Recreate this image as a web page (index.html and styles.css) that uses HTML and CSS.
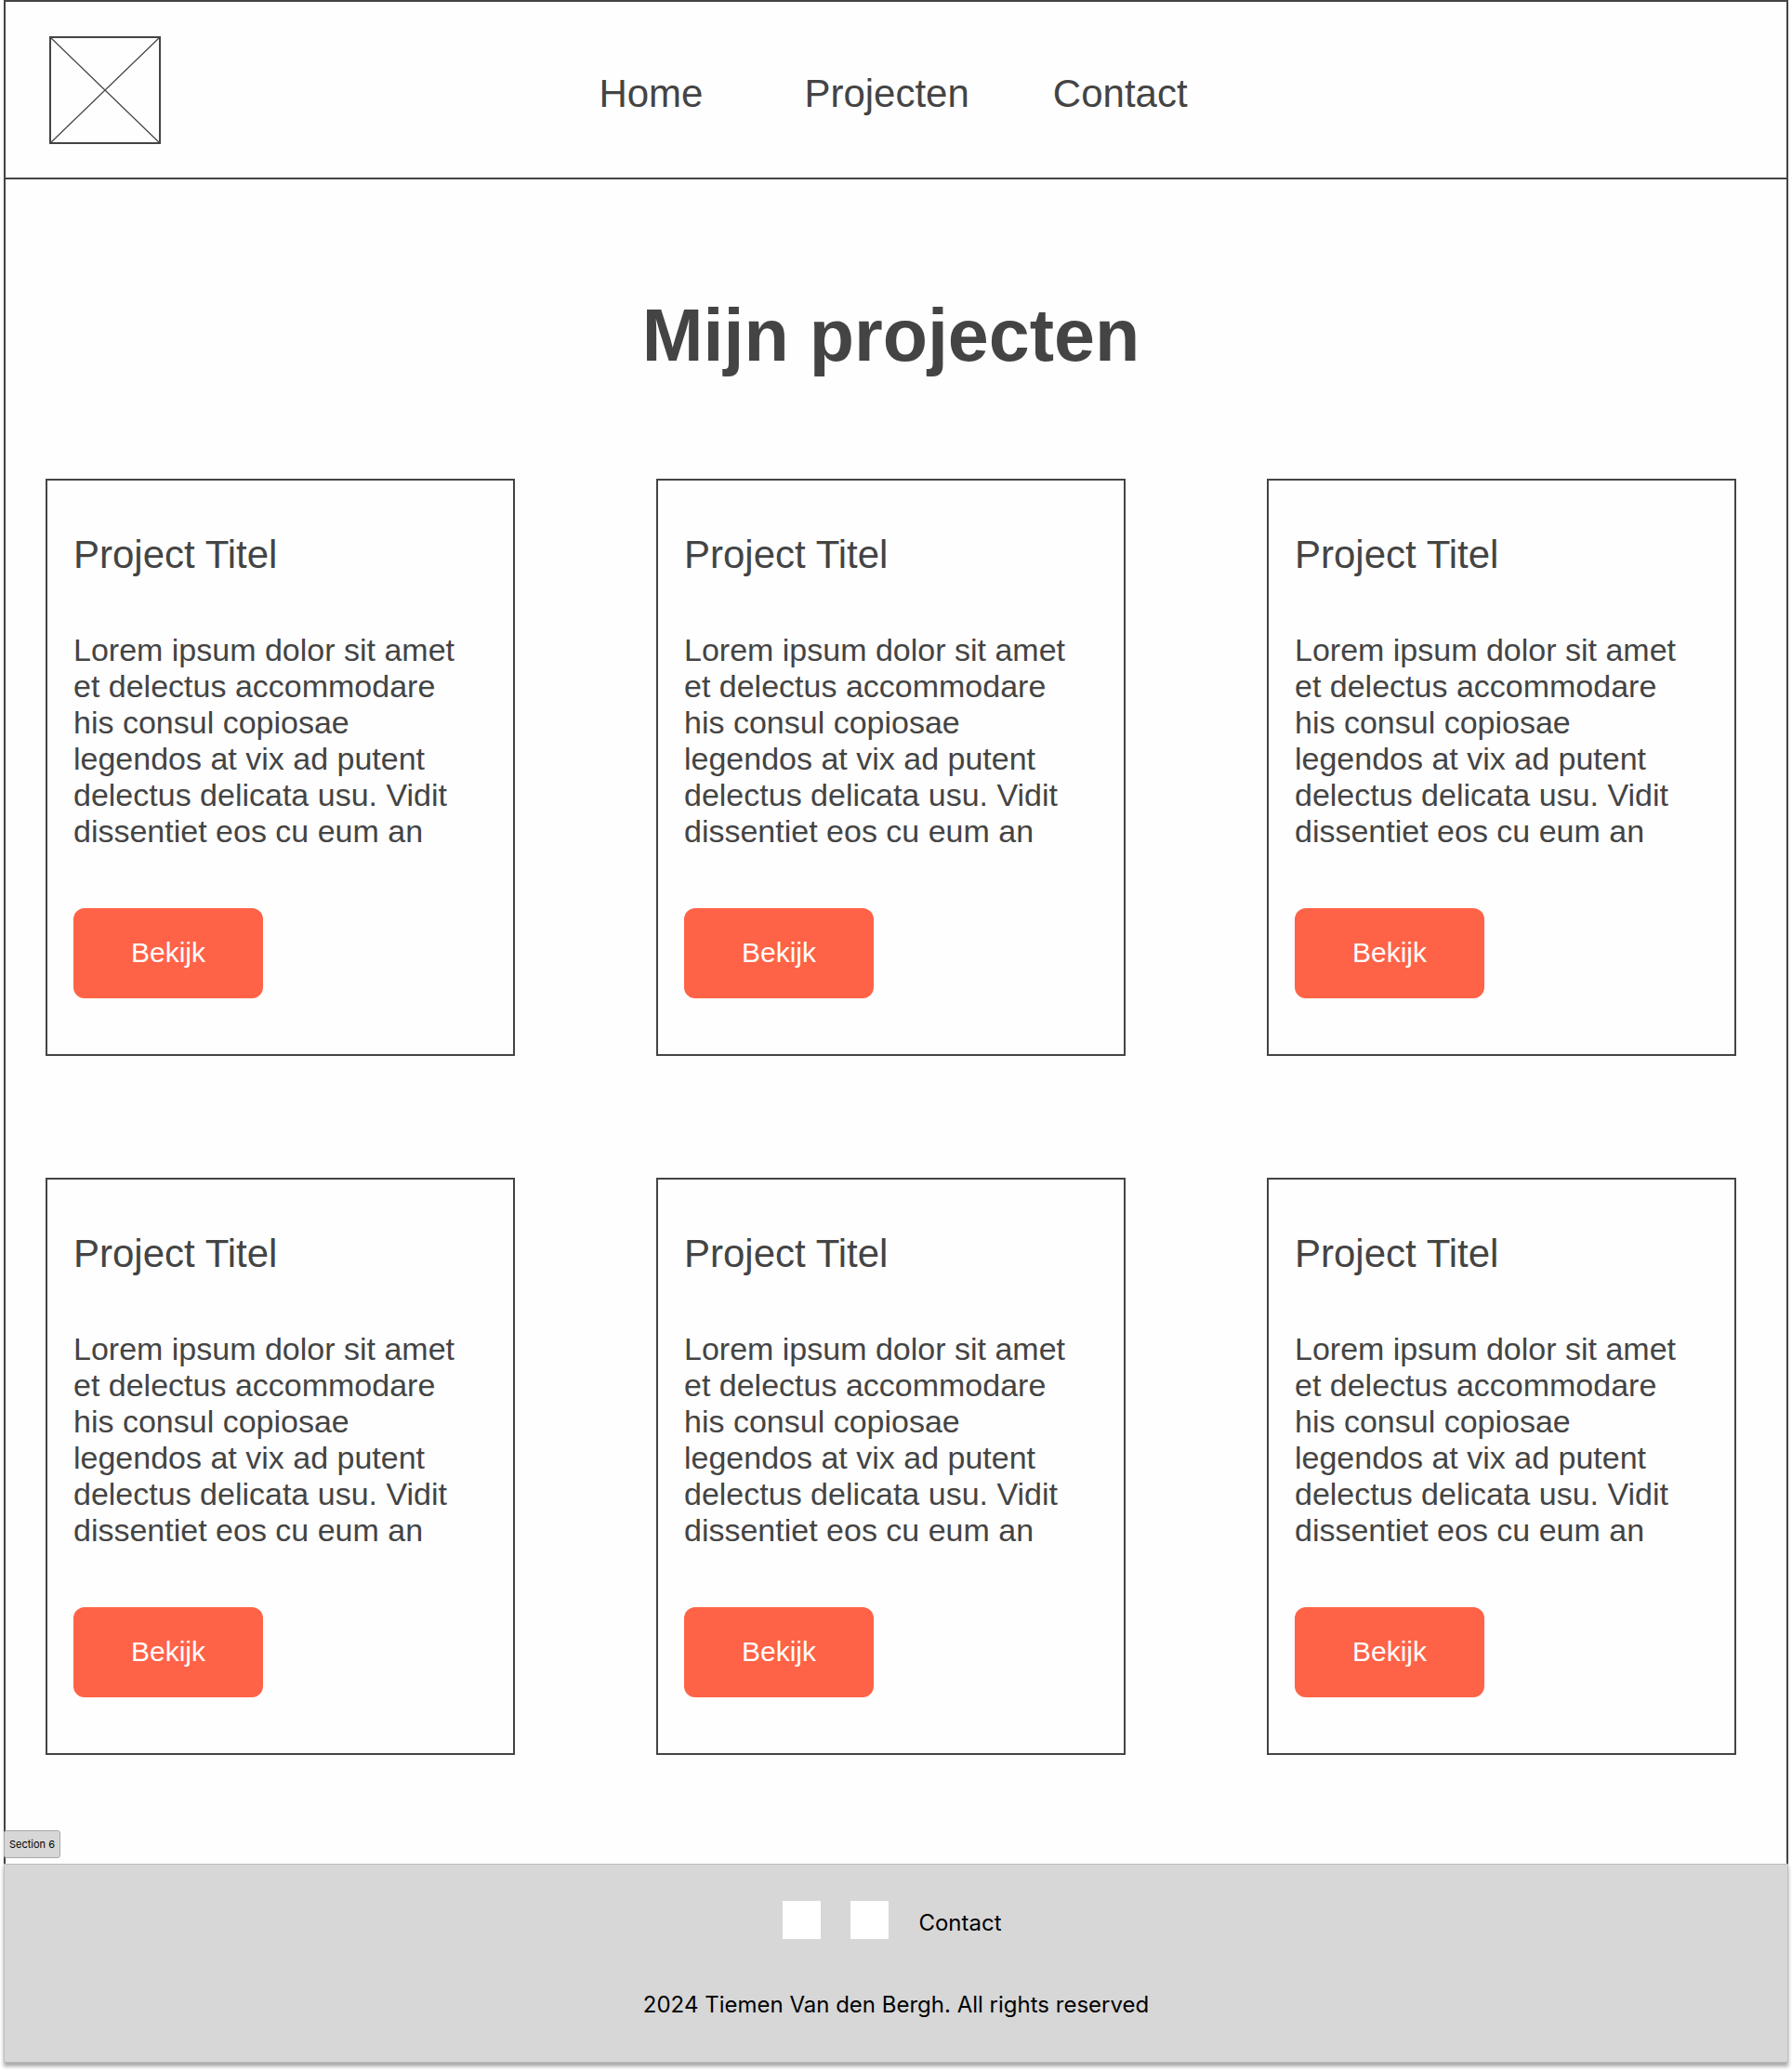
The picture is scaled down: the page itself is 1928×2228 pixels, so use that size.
FILE: index.html
```html
<!DOCTYPE html>
<html lang="nl">
<head>
  <meta charset="utf-8">
  <meta name="viewport" content="width=device-width, initial-scale=1">
  <title>Mijn projecten</title>
  <link rel="stylesheet" href="styles.css">
</head>
<body>
  <div class="page">
    <div class="frame">
      <header class="header">
        <svg class="logo" viewBox="0 0 120 116" aria-hidden="true">
          <path class="logo-cross" d="M1 1 119 115M119 1 1 115"/>
          <rect class="logo-box" x="1" y="1" width="118" height="114"/>
        </svg>
        <nav class="nav">
          <a class="nav-link nav-link-home" href="#">Home</a>
          <a class="nav-link" href="#">Projecten</a>
          <a class="nav-link" href="#">Contact</a>
        </nav>
      </header>

      <main class="main">
        <h1 class="heading">Mijn projecten</h1>
        <div class="projects">
          <article class="card">
            <h2 class="card-title">Project Titel</h2>
            <p class="card-text">Lorem ipsum dolor sit amet et delectus accommodare his consul copiosae legendos at vix ad putent delectus delicata usu. Vidit dissentiet eos cu eum an</p>
            <button class="card-button" type="button">Bekijk</button>
          </article>
          <article class="card">
            <h2 class="card-title">Project Titel</h2>
            <p class="card-text">Lorem ipsum dolor sit amet et delectus accommodare his consul copiosae legendos at vix ad putent delectus delicata usu. Vidit dissentiet eos cu eum an</p>
            <button class="card-button" type="button">Bekijk</button>
          </article>
          <article class="card">
            <h2 class="card-title">Project Titel</h2>
            <p class="card-text">Lorem ipsum dolor sit amet et delectus accommodare his consul copiosae legendos at vix ad putent delectus delicata usu. Vidit dissentiet eos cu eum an</p>
            <button class="card-button" type="button">Bekijk</button>
          </article>
          <article class="card">
            <h2 class="card-title">Project Titel</h2>
            <p class="card-text">Lorem ipsum dolor sit amet et delectus accommodare his consul copiosae legendos at vix ad putent delectus delicata usu. Vidit dissentiet eos cu eum an</p>
            <button class="card-button" type="button">Bekijk</button>
          </article>
          <article class="card">
            <h2 class="card-title">Project Titel</h2>
            <p class="card-text">Lorem ipsum dolor sit amet et delectus accommodare his consul copiosae legendos at vix ad putent delectus delicata usu. Vidit dissentiet eos cu eum an</p>
            <button class="card-button" type="button">Bekijk</button>
          </article>
          <article class="card">
            <h2 class="card-title">Project Titel</h2>
            <p class="card-text">Lorem ipsum dolor sit amet et delectus accommodare his consul copiosae legendos at vix ad putent delectus delicata usu. Vidit dissentiet eos cu eum an</p>
            <button class="card-button" type="button">Bekijk</button>
          </article>
        </div>
      </main>
    </div>

    <footer class="footer">
      <span class="section-tag">Section 6</span>
      <div class="footer-links">
        <span class="social"></span>
        <span class="social"></span>
        <a class="footer-contact" href="#">Contact</a>
      </div>
      <p class="copyright">2024 Tiemen Van den Bergh. All rights reserved</p>
    </footer>
  </div>
</body>
</html>
```
FILE: styles.css
```css
* {
  box-sizing: border-box;
}

body {
  margin: 0;
  background: #fff;
  color: #444;
  font-family: "Liberation Sans", Arial, sans-serif;
}

.page {
  margin: 0 4px 8px;
  background: #fefefe;
  box-shadow: 0 4px 4px rgba(0, 0, 0, 0.12);
}

.frame {
  border: 2px solid #444;
  border-bottom: 0;
}

/* Header */
.header {
  display: grid;
  grid-template-columns: 1fr auto 1fr;
  align-items: center;
  padding: 37px 53px 36px 47px;
  border-bottom: 2px solid #444;
}

.logo {
  display: block;
  width: 120px;
  height: 116px;
  fill: none;
  stroke: #444;
}

.logo-box {
  stroke-width: 2;
}

.logo-cross {
  stroke-width: 1.2;
}

.nav {
  display: flex;
  gap: 90px;
  padding-top: 8px;
}

.nav-link {
  color: inherit;
  font-size: 42px;
  line-height: 48px;
  text-decoration: none;
}

.nav-link-home {
  min-width: 131px;
}

/* Projects */
.main {
  padding: 123px 54px 117px 43px;
}

.heading {
  margin: 0 0 109px;
  font-size: 79px;
  line-height: 90px;
  text-align: center;
}

.projects {
  display: grid;
  grid-template-columns: repeat(3, 1fr);
  gap: 131px 152px;
}

.card {
  padding: 56px 28px 60px;
  border: 2px solid #444;
}

.card-title {
  margin: 0 0 59px;
  font-size: 42px;
  font-weight: 400;
  line-height: 48px;
}

.card-text {
  max-width: 424px;
  margin: 0 0 63px;
  font-size: 34px;
  line-height: 39px;
}

.card-button {
  display: block;
  width: 204px;
  height: 97px;
  padding: 0 0 2px;
  border: 0;
  border-radius: 12px;
  background: #ff6347;
  color: #fff;
  font: 30px/34px "Liberation Sans", Arial, sans-serif;
}

/* Footer */
.footer {
  position: relative;
  padding: 39px 0 47px;
  border: 1px solid #bdbdbd;
  background: #d7d7d7;
  box-shadow: 0 4px 4px rgba(0, 0, 0, 0.25);
  color: #000;
  font-family: Inter, sans-serif;
  font-size: 24px;
  line-height: 29px;
}

.section-tag {
  position: absolute;
  top: -37px;
  left: -1px;
  padding: 7px 5px;
  border: 1px solid #a8a8a8;
  border-radius: 3px;
  background: #d7d7d7;
  font-size: 11px;
  line-height: 14px;
}

.footer-links {
  display: flex;
  align-items: center;
  justify-content: center;
  gap: 32px;
  padding-right: 8px;
}

.social {
  width: 41px;
  height: 41px;
  background: #fff;
}

.footer-contact {
  padding-top: 5px;
  color: inherit;
  text-decoration: none;
}

.copyright {
  margin: 56px 0 0;
  text-align: center;
}
```
